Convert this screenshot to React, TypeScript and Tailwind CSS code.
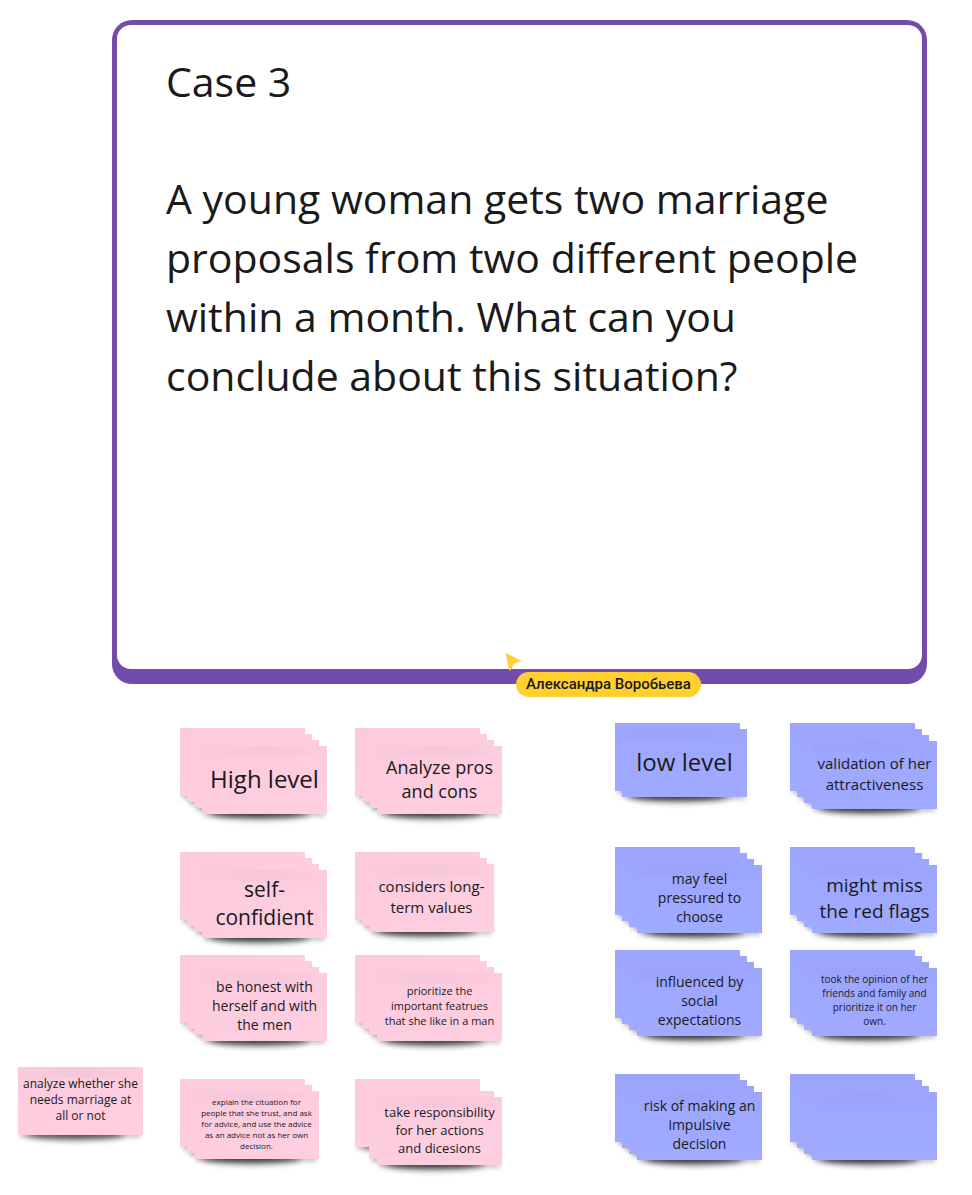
import clsx from "clsx";

type Tone = "pink" | "blue";
type Size = "8" | "10" | "11" | "12" | "13" | "14" | "15" | "18" | "19" | "21" | "24";

type Note = {
  lines: string[];
  size: Size;
  depth: number[];
};

const textSize: Record<Size, string> = {
  "8": "pb-1 text-[8px] leading-[11px]",
  "10": "pb-1 text-[10px] leading-[14px]",
  "11": "pb-1 text-[11px] leading-[15px]",
  "12": "pb-0.5 text-[12px] leading-[16px]",
  "13": "pb-0.5 text-[13px] leading-[18px]",
  "14": "pb-1 text-[14px] leading-[19px]",
  "15": "pb-0.5 text-[15px] leading-[21px]",
  "18": "pb-0.5 text-[18px] leading-[24px]",
  "19": "pb-0.5 text-[19px] leading-[26px]",
  "21": "pb-0.5 text-[21px] leading-[28px]",
  "24": "pb-0.5 text-[24px] leading-[32px]",
};

const sheetOffset = [
  "left-0 top-0",
  "left-[7px] top-[6px]",
  "left-[14px] top-[12px]",
  "left-[22px] top-[18px]",
];

const full = [0, 1, 2, 3];

const highLevel: Note[] = [
  { lines: ["High level"], size: "24", depth: full },
  { lines: ["Analyze pros", "and cons"], size: "18", depth: full },
  { lines: ["self-", "confidient"], size: "21", depth: full },
  { lines: ["considers long-", "term values"], size: "15", depth: [0, 1, 2] },
  { lines: ["be honest with", "herself and with", "the men"], size: "14", depth: full },
  { lines: ["prioritize the", "important featrues", "that she like in a man"], size: "11", depth: full },
  {
    lines: [
      "explain the cituation for",
      "people that she trust, and ask",
      "for advice, and use the advice",
      "as an advice not as her own",
      "decision.",
    ],
    size: "8",
    depth: [0, 1, 2],
  },
  { lines: ["take responsibility", "for her actions", "and dicesions"], size: "13", depth: [0, 2, 3] },
];

const lowLevel: Note[] = [
  { lines: ["low level"], size: "24", depth: [0, 1] },
  { lines: ["validation of her", "attractiveness"], size: "15", depth: full },
  { lines: ["may feel", "pressured to", "choose"], size: "14", depth: full },
  { lines: ["might miss", "the red flags"], size: "19", depth: full },
  { lines: ["influenced by", "social", "expectations"], size: "14", depth: full },
  {
    lines: ["took the opinion of her", "friends and family and", "prioritize it on her", "own."],
    size: "10",
    depth: full,
  },
  { lines: ["risk of making an", "impulsive", "decision"], size: "14", depth: full },
  { lines: [], size: "14", depth: full },
];

const single: Note = {
  lines: ["analyze whether she", "needs marriage at", "all or not"],
  size: "12",
  depth: [0],
};

function Sheet({ tone, place, note }: { tone: Tone; place: number; note?: Note }) {
  const pink = tone === "pink";
  return (
    <div className={clsx("absolute h-[68px] w-[125px]", sheetOffset[place])}>
      <div className="absolute right-[18px] -bottom-[5px] left-[8px] h-[12px] rounded-[50%] bg-black/60 blur-[3px]" />
      <div className="absolute inset-x-[2px] -bottom-[3px] h-[8px] bg-black/20 blur-[2px]" />
      <div
        className={clsx(
          "relative flex h-full flex-col items-center justify-center text-center whitespace-nowrap text-[#1a1a1a]",
          pink
            ? "bg-linear-to-br from-[#fccadd] to-[#ffcfe1]"
            : "bg-linear-to-b from-[#9ca5fb] via-[#9da7ff] via-20% to-[#a0aaff]",
          note && textSize[note.size],
        )}
      >
        {note && (
          <div
            className={clsx(
              "absolute inset-x-0 top-0 h-[11px] bg-linear-to-r",
              pink ? "from-[#fbcadd] via-[#f6c6d9] to-[#fdcddf]" : "from-[#9ca5fb] via-[#9aa3f7] to-[#9da7fe]",
            )}
          />
        )}
        {note?.lines.map((line) => (
          <span key={line} className="relative">
            {line}
          </span>
        ))}
      </div>
    </div>
  );
}

function Stack({ note, tone }: { note: Note; tone: Tone }) {
  return (
    <li className="relative isolate h-[68px] w-[125px]">
      {note.depth.map((place, i) => (
        <Sheet key={place} tone={tone} place={place} note={i === note.depth.length - 1 ? note : undefined} />
      ))}
    </li>
  );
}

function Group({ notes, tone, label }: { notes: Note[]; tone: Tone; label: string }) {
  return (
    <ul
      aria-label={label}
      className="grid grid-cols-[125px_125px] grid-rows-[124px_103px_124px_auto] gap-x-[50px]"
    >
      {notes.map((note, i) => (
        <Stack key={i} note={note} tone={tone} />
      ))}
    </ul>
  );
}

function Collaborator() {
  return (
    <div className="absolute top-[632px] left-[393px]">
      <svg className="block h-5 w-5" viewBox="0 0 20 20" aria-hidden="true">
        <path d="M0.6 0.8 L17.2 9.2 Q11 10 8.6 12.4 L5.6 18.4 Q4.6 19 4.1 17.8 Z" fill="#ffd02f" />
      </svg>
      <div className="ml-[11px] flex h-[25px] items-center rounded-full bg-[#ffd02f] px-[10px] font-[Roboto,sans-serif] text-[15px] font-medium whitespace-nowrap text-[#1a1a1a]">
        Александра Воробьева
      </div>
    </div>
  );
}

export default function App() {
  return (
    <main className="min-h-screen bg-white pt-5 font-['Open_Sans',sans-serif] text-[#1a1a1a]">
      <section className="relative mr-[45px] ml-28 rounded-[20px] bg-[#734bab] px-[5px] pt-[5px] pb-[15px]">
        <div className="min-h-[644px] rounded-[14px] bg-white px-[49px] pt-[27px] text-[41px] leading-[59px]">
          <h1 className="mb-[58px]">Case 3</h1>
          <p>
            A young woman gets two marriage proposals from two different people within a month. What can you
            conclude about this situation?
          </p>
        </div>
        <Collaborator />
      </section>

      <section className="flex items-start pt-[39px] pb-[53px]">
        <ul aria-label="Unsorted" className="mr-[37px] ml-[18px] self-end pb-[12px]">
          <Stack note={single} tone="pink" />
        </ul>
        <div className="mr-[135px] pt-[5px]">
          <Group notes={highLevel} tone="pink" label="High level" />
        </div>
        <Group notes={lowLevel} tone="blue" label="Low level" />
      </section>
    </main>
  );
}
